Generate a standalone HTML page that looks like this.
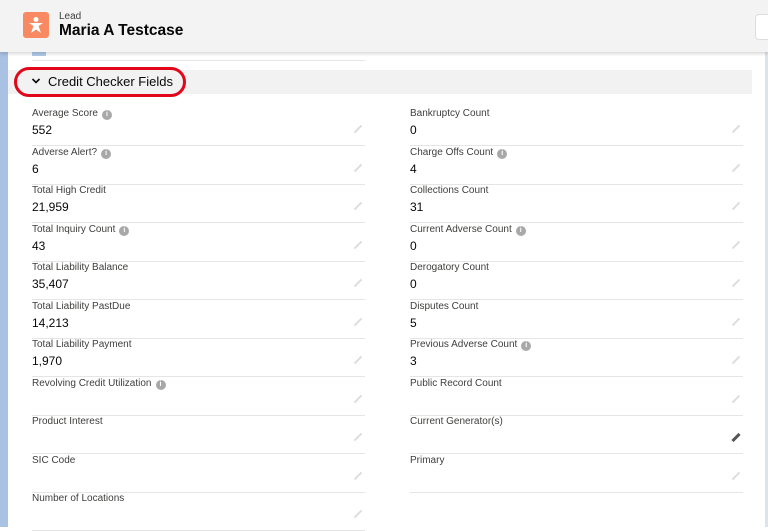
<!DOCTYPE html>
<html><head><style>
body{margin:0;width:768px;height:527px;overflow:hidden;background:#fff;font-family:"Liberation Sans",sans-serif;position:relative}
.hdr{position:absolute;left:0;top:0;width:768px;height:52px;background:#f3f3f3;box-shadow:0 2px 3px rgba(0,0,0,.15);z-index:2}
.ic{position:absolute;left:23px;top:12px;width:26px;height:26px;background:#f88962;border-radius:3px}
.lead{position:absolute;left:59px;top:11px;font-size:10px;color:#3e3e3c}
.name{position:absolute;left:59px;top:22px;font-size:15.5px;font-weight:bold;color:#080707}
.btn{position:absolute;left:755px;top:14px;width:20px;height:24px;background:#fff;border:1px solid #ddd;border-radius:4px}
.lstrip{position:absolute;left:0;top:52px;width:8px;height:475px;background:#a9c1e2}
.rstrip{position:absolute;left:765px;top:52px;width:3px;height:475px;background:#dde3ea}
.sec{position:absolute;left:8px;top:70px;width:744px;height:24px;background:#f3f2f2}
.oval{position:absolute;left:14px;top:67px;width:172px;height:30px;border:3px solid #e2061a;border-radius:16px;box-sizing:border-box}
.sect{position:absolute;left:48px;top:74px;font-size:13px;color:#080707}
.f{position:absolute;width:333px;height:38px;border-bottom:1px solid #e5e5e5}
.l{position:absolute;top:1px;font-size:10px;color:#3e3e3c}
.v{position:absolute;top:16px;font-size:12px;color:#080707}
.i{display:inline-block;width:10px;height:10px;border-radius:50%;background:#a8a8a8;color:#fff;font-size:7px;text-align:center;line-height:10px;margin-left:4px;vertical-align:0;font-weight:bold}
.p{position:absolute;right:2px;top:21px;width:10px;height:2px;background:#ddd;transform:rotate(-45deg)}
.p.d{background:#555;height:3px}
</style></head><body>
<div class="hdr"><div class="ic"><svg width="26" height="26" viewBox="0 0 26 26"><circle cx="13" cy="7.5" r="2.5" fill="#fff"/><path d="M6 11h14l-4.5 3 2.5 7-5-3.5-5 3.5 2.5-7z" fill="#fff"/></svg></div>
<div class="lead">Lead</div><div class="name">Maria A Testcase</div><div class="btn"></div></div>
<div class="lstrip"></div><div class="rstrip"></div>
<div style="position:absolute;left:32px;top:60px;width:333px;border-bottom:1px solid #e5e5e5"></div>
<div style="position:absolute;left:32px;top:52px;width:14px;height:4px;background:#7aa6dc;opacity:.6"></div>
<div class="sec"></div><div class="oval"></div>
<svg style="position:absolute;left:31px;top:77px" width="10" height="8" viewBox="0 0 10 8"><path d="M1.5 2 5 5.5 8.5 2" fill="none" stroke="#080707" stroke-width="1.6"/></svg>
<div class="sect">Credit Checker Fields</div>

<div class="f" style="left:32px;top:107px"><div class="l">Average Score<span class="i">i</span></div><div class="v">552</div><div class="p"></div></div>
<div class="f" style="left:32px;top:146px"><div class="l">Adverse Alert?<span class="i">i</span></div><div class="v">6</div><div class="p"></div></div>
<div class="f" style="left:32px;top:184px"><div class="l">Total High Credit</div><div class="v">21,959</div><div class="p"></div></div>
<div class="f" style="left:32px;top:223px"><div class="l">Total Inquiry Count<span class="i">i</span></div><div class="v">43</div><div class="p"></div></div>
<div class="f" style="left:32px;top:261px"><div class="l">Total Liability Balance</div><div class="v">35,407</div><div class="p"></div></div>
<div class="f" style="left:32px;top:300px"><div class="l">Total Liability PastDue</div><div class="v">14,213</div><div class="p"></div></div>
<div class="f" style="left:32px;top:338px"><div class="l">Total Liability Payment</div><div class="v">1,970</div><div class="p"></div></div>
<div class="f" style="left:32px;top:377px"><div class="l">Revolving Credit Utilization<span class="i">i</span></div><div class="p"></div></div>
<div class="f" style="left:32px;top:415px"><div class="l">Product Interest</div><div class="p"></div></div>
<div class="f" style="left:32px;top:454px"><div class="l">SIC Code</div><div class="p"></div></div>
<div class="f" style="left:32px;top:492px"><div class="l">Number of Locations</div><div class="p"></div></div>

<div class="f" style="left:410px;top:107px"><div class="l">Bankruptcy Count</div><div class="v">0</div><div class="p"></div></div>
<div class="f" style="left:410px;top:146px"><div class="l">Charge Offs Count<span class="i">i</span></div><div class="v">4</div><div class="p"></div></div>
<div class="f" style="left:410px;top:184px"><div class="l">Collections Count</div><div class="v">31</div><div class="p"></div></div>
<div class="f" style="left:410px;top:223px"><div class="l">Current Adverse Count<span class="i">i</span></div><div class="v">0</div><div class="p"></div></div>
<div class="f" style="left:410px;top:261px"><div class="l">Derogatory Count</div><div class="v">0</div><div class="p"></div></div>
<div class="f" style="left:410px;top:300px"><div class="l">Disputes Count</div><div class="v">5</div><div class="p"></div></div>
<div class="f" style="left:410px;top:338px"><div class="l">Previous Adverse Count<span class="i">i</span></div><div class="v">3</div><div class="p"></div></div>
<div class="f" style="left:410px;top:377px"><div class="l">Public Record Count</div><div class="p"></div></div>
<div class="f" style="left:410px;top:415px"><div class="l">Current Generator(s)</div><div class="p d"></div></div>
<div class="f" style="left:410px;top:454px"><div class="l">Primary</div><div class="p"></div></div>
</body></html>
